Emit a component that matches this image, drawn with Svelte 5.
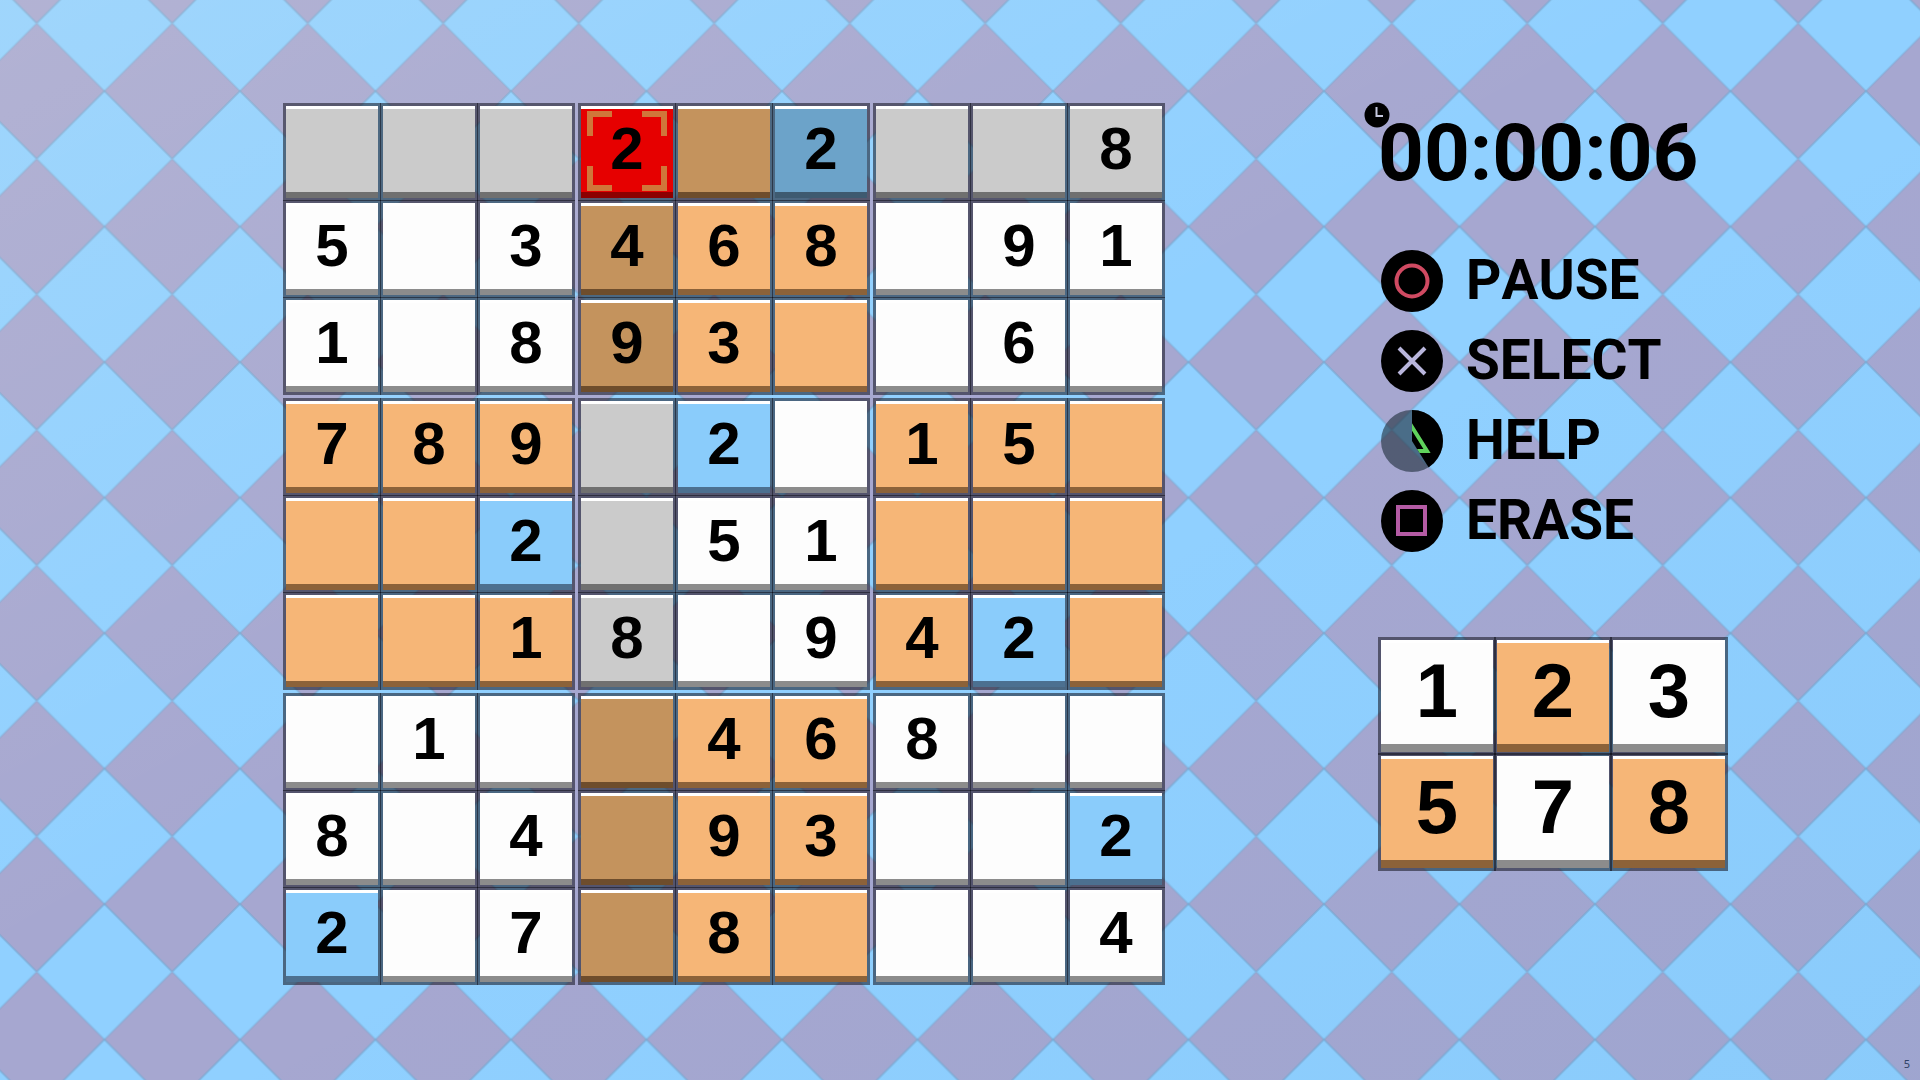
<script>
    // w = plain, g = in line with the cursor, o = zone, d = both, b/s = same digit, x = conflict
    const rows = [
        { digits: '...2.2..8', tones: 'gggxdsggg' },
        { digits: '5.3468.91', tones: 'wwwdoowww' },
        { digits: '1.893..6.', tones: 'wwwdoowww' },
        { digits: '789.2.15.', tones: 'ooogbwooo' },
        { digits: '..2.51...', tones: 'oobgwwooo' },
        { digits: '..18.942.', tones: 'ooogwwobo' },
        { digits: '.1..468..', tones: 'wwwdoowww' },
        { digits: '8.4.93..2', tones: 'wwwdoowwb' },
        { digits: '2.7.8...4', tones: 'bwwdoowww' }
    ];

    const toneNames = {
        w: 'white',
        g: 'grey',
        o: 'orange',
        d: 'brown',
        b: 'blue',
        s: 'steel',
        x: 'red'
    };

    const keys = [
        { digit: 1, tone: 'white' },
        { digit: 2, tone: 'orange' },
        { digit: 3, tone: 'white' },
        { digit: 5, tone: 'orange' },
        { digit: 7, tone: 'white' },
        { digit: 8, tone: 'orange' }
    ];

    const actions = [
        { label: 'PAUSE', icon: 'circle' },
        { label: 'SELECT', icon: 'cross' },
        { label: 'HELP', icon: 'triangle' },
        { label: 'ERASE', icon: 'square' }
    ];

    let cursor = $state({ row: 0, col: 3 });

    function getCells(block) {
        const cells = [];
        for (let i = 0; i < 9; i++) {
            const row = Math.floor(block / 3) * 3 + Math.floor(i / 3);
            const col = (block % 3) * 3 + (i % 3);
            const digit = rows[row].digits[col];
            cells.push({
                row,
                col,
                digit: digit === '.' ? '' : digit,
                tone: toneNames[rows[row].tones[col]]
            });
        }
        return cells;
    }

    const blocks = Array.from({ length: 9 }, (_, i) => getCells(i));
</script>

<div class="page">
    <svg class="backdrop" aria-hidden="true">
        <defs>
            <pattern id="diamonds" x="36.7" y="23.3" width="135.5" height="135.5" patternUnits="userSpaceOnUse" viewBox="0 0 136 136">
                <rect width="136" height="136" fill="#90d0ff" />
                <path d="M0 0L68 68L0 136ZM136 0L68 68L136 136Z" fill="#a6a7d0" />
                <path d="M0 136L68 68L136 136" fill="none" stroke="#6fa3cc" stroke-width="2" opacity="0.5" />
                <path d="M0 0L68 68L136 0" fill="none" stroke="#6fa3cc" stroke-width="2" opacity="0.3" />
            </pattern>
            <linearGradient id="light" x1="0" y1="0" x2="1" y2="1">
                <stop offset="0" stop-color="#fff8e8" stop-opacity="0.14" />
                <stop offset="0.45" stop-color="#fff8e8" stop-opacity="0" />
                <stop offset="0.55" stop-color="#3c8cc8" stop-opacity="0" />
                <stop offset="1" stop-color="#3c8cc8" stop-opacity="0.07" />
            </linearGradient>
        </defs>
        <rect width="100%" height="100%" fill="url(#diamonds)" />
        <rect width="100%" height="100%" fill="url(#light)" />
    </svg>

    <main class="game">
        <div class="board">
            {#each blocks as block}
                <div class="block">
                    {#each block as cell}
                        <button
                            class="cell {cell.tone}"
                            aria-label="Row {cell.row + 1}, column {cell.col + 1} {cell.digit}"
                            onclick={() => (cursor = { row: cell.row, col: cell.col })}
                        >
                            {cell.digit}
                            {#if cursor.row === cell.row && cursor.col === cell.col}
                                <svg class="cursor" viewBox="0 0 80 80">
                                    <path d="M3 25V3H25M55 3H77V25M77 55V77H55M25 77H3V55" fill="none" stroke="#d0763a" stroke-width="6" />
                                </svg>
                            {/if}
                        </button>
                    {/each}
                </div>
            {/each}
        </div>

        <aside class="side">
            <div class="timer">
                <svg class="clock" viewBox="0 0 26 26" aria-hidden="true">
                    <circle cx="13" cy="13" r="12.5" />
                    <path d="M12.5 5V14H19" fill="none" stroke="#c4c6dc" stroke-width="2" />
                </svg>
                00:00:06
            </div>

            <div class="actions">
                {#each actions as action}
                    <button class="action">
                        <svg width="62" height="62" viewBox="0 0 62 62" aria-hidden="true">
                            {#if action.icon === 'triangle'}
                                <clipPath id="ready">
                                    <path d="M31 0H62V62H50.5L31 31Z" />
                                </clipPath>
                                <circle cx="31" cy="31" r="31" fill="#1c2c38" opacity="0.6" />
                                <g clip-path="url(#ready)">
                                    <circle cx="31" cy="31" r="31" />
                                    <path d="M31 17L46 41H16Z" fill="none" stroke="#5fd35c" stroke-width="4" />
                                </g>
                            {:else}
                                <circle cx="31" cy="31" r="31" />
                            {/if}
                            {#if action.icon === 'circle'}
                                <circle cx="31" cy="31" r="15.5" fill="none" stroke="#d04a62" stroke-width="4" />
                            {:else if action.icon === 'cross'}
                                <path d="M18 18L44 44M44 18L18 44" stroke="#b9b6dc" stroke-width="4" />
                            {:else if action.icon === 'square'}
                                <rect x="17" y="17" width="27" height="27" fill="none" stroke="#b45ba4" stroke-width="4" />
                            {/if}
                        </svg>
                        <span>{action.label}</span>
                    </button>
                {/each}
            </div>

            <div class="keypad">
                {#each keys as key}
                    <button class="cell key {key.tone}">{key.digit}</button>
                {/each}
            </div>
        </aside>
    </main>

    <span class="counter">5</span>
</div>

<style>
    :global(body) {
        margin: 0;
        background: #90d0ff;
    }

    .page {
        position: relative;
        min-height: 100vh;
        overflow: hidden;
        color: #000;
    }

    .backdrop {
        position: absolute;
        inset: 0;
        width: 100%;
        height: 100%;
    }

    .game {
        position: relative;
        display: flex;
        align-items: flex-start;
        gap: 214px;
        padding: 103px 0 95px 283px;
    }

    .board {
        display: grid;
        grid-template-columns: repeat(3, 291px);
        gap: 4px;
        flex-shrink: 0;
    }

    .block {
        display: grid;
        grid-template-columns: repeat(3, 97px);
        grid-auto-rows: 97px;
    }

    /* Cells are one pixel larger than their track, so that shared borders overlap */
    .cell {
        --face: #fdfdfd;
        --edge: #8c8c8c;
        position: relative;
        display: flex;
        align-items: center;
        justify-content: center;
        box-sizing: border-box;
        width: 98px;
        height: 98px;
        padding: 0 0 7px;
        border: 3px solid rgba(16, 16, 28, 0.55);
        background: var(--face);
        background-clip: padding-box;
        box-shadow: inset 0 3px #fff, inset 0 -6px var(--edge);
        color: #000;
        font-family: "Liberation Sans", Arial, sans-serif;
        font-size: 60px;
        font-weight: 700;
        line-height: 1;
        cursor: pointer;
    }

    .grey {
        --face: #cbcbcb;
        --edge: #707070;
    }

    .orange {
        --face: #f6b677;
        --edge: #8c6239;
    }

    .brown {
        --face: #c4935d;
        --edge: #6e4d2c;
    }

    .blue {
        --face: #8accfb;
        --edge: #4c7090;
    }

    .steel {
        --face: #6ca3c9;
        --edge: #3e5a70;
    }

    .red {
        --face: #e60000;
        --edge: #8c0000;
    }

    .cursor {
        position: absolute;
        top: 5px;
        left: 6px;
        width: 80px;
        height: 80px;
    }

    .side {
        display: flex;
        flex-direction: column;
        padding-top: 10px;
        font-family: Roboto, sans-serif;
        font-weight: 700;
        font-kerning: none;
    }

    .timer {
        position: relative;
        font-size: 80px;
        line-height: 80px;
        white-space: nowrap;
    }

    .clock {
        position: absolute;
        top: -11px;
        left: -14px;
        width: 26px;
        height: 26px;
    }

    .actions {
        display: flex;
        flex-direction: column;
        align-items: flex-start;
        gap: 18px;
        margin: 57px 0 85px 3px;
    }

    .action {
        display: flex;
        align-items: center;
        gap: 23px;
        height: 62px;
        padding: 0;
        border: none;
        background: none;
        color: #000;
        font: inherit;
        font-kerning: none;
        font-size: 55px;
        line-height: 62px;
        cursor: pointer;
    }

    .action span {
        padding-bottom: 2px;
    }

    .keypad {
        display: grid;
        grid-template-columns: repeat(3, 116px);
        grid-auto-rows: 116px;
    }

    .key {
        width: 118px;
        height: 118px;
        padding-bottom: 11px;
        box-shadow: inset 0 3px #fff, inset 0 -8px var(--edge);
        font-size: 76px;
    }

    .counter {
        position: absolute;
        right: 10px;
        bottom: 8px;
        color: #2f4266;
        font-family: "Noto Sans", sans-serif;
        font-size: 11px;
        line-height: 16px;
    }
</style>
